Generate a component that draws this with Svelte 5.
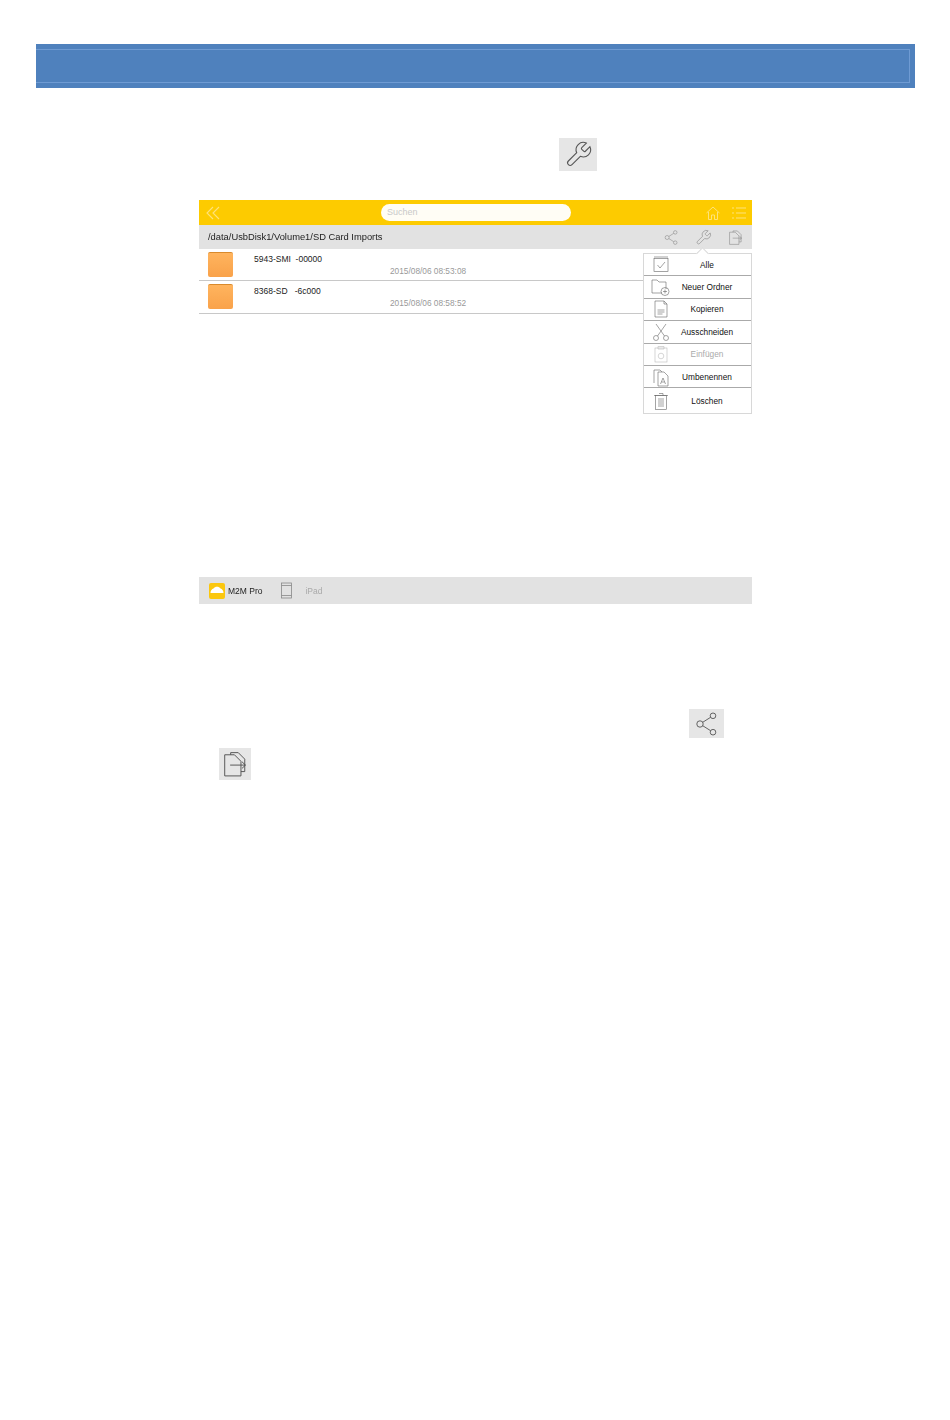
<script>
  const files = [
    { name: '5943-SMI  -00000', date: '2015/08/06 08:53:08' },
    { name: '8368-SD   -6c000', date: '2015/08/06 08:58:52' }
  ];
  const menu = [
    { label: 'Alle', icon: 'check' },
    { label: 'Neuer Ordner', icon: 'folder' },
    { label: 'Kopieren', icon: 'copy' },
    { label: 'Ausschneiden', icon: 'cut' },
    { label: 'Einfügen', icon: 'paste', off: true },
    { label: 'Umbenennen', icon: 'rename' },
    { label: 'Löschen', icon: 'trash' }
  ];
</script>

{#snippet wrench(size)}
  <svg width={size} height={size} viewBox="0 0 24 24" fill="none" stroke="currentColor" stroke-width="0.9">
    <path d="M14.700 6.300a1 1 0 0 0 0 1.400l1.600 1.600a1 1 0 0 0 1.400 0l3.770-3.770a6 6 0 0 1-7.940 7.940l-6.910 6.910a2.120 2.120 0 0 1-3-3l6.910-6.910a6 6 0 0 1 7.940-7.940l-3.760 3.760z" />
  </svg>
{/snippet}

{#snippet share(size)}
  <svg width={size} height={size} viewBox="0 0 24 24" fill="none" stroke="currentColor" stroke-width="0.9">
    <circle cx="5" cy="12" r="3.200" />
    <circle cx="18" cy="3.800" r="2.800" />
    <circle cx="18" cy="20.200" r="2.800" />
    <path d="M7.700 10.300 15.600 5.300M7.700 13.700l7.900 5" />
  </svg>
{/snippet}

{#snippet exportDoc(size)}
  <svg width={size} height={size} viewBox="0 0 24 24" fill="none" stroke="currentColor" stroke-width="0.9">
    <path d="M8 3.500V1.500h7l6 6V19h-3.500" />
    <path d="M2.500 3.500h9l6 6V23h-15z" />
    <path d="M7.500 13h14M18.500 10l3.200 3-3.200 3" />
  </svg>
{/snippet}

{#snippet menuIcon(name)}
  <svg width="20" height="20" viewBox="0 0 20 20" fill="none" stroke="currentColor" stroke-width="0.6">
    {#if name === 'check'}
      <rect x="3" y="3.500" width="14" height="13" />
      <path d="M3 2h14M6.500 10l2.500 3 5-6" />
    {:else if name === 'folder'}
      <path d="M1 5V3h5l2 2h7v7M1 5v11h10" />
      <circle cx="14" cy="14.500" r="4" />
      <path d="M12 14.500h4M14 12.500v4" />
    {:else if name === 'copy'}
      <path d="M4 2h9l3 3v13H4z" />
      <path d="M13 2v3h3M6.500 11h7M6.500 13h7M6.500 15h5" />
    {:else if name === 'cut'}
      <circle cx="5" cy="16" r="2.500" />
      <circle cx="15" cy="16" r="2.500" />
      <path d="M6.500 14 15 2M13.500 14 5 2" />
    {:else if name === 'paste'}
      <rect x="4" y="4" width="12" height="14" />
      <path d="M7 2.500h6V5H7z" />
      <circle cx="10" cy="12" r="2.800" />
    {:else if name === 'rename'}
      <path d="M3 16V3h6l2 2" />
      <path d="M7 5h6l4 4v10H7z" />
      <path d="M9.500 17l2.500-6 2.500 6M10.500 15h3" />
    {:else}
      <rect x="4.500" y="4.500" width="11" height="14" />
      <path d="M3 4.500h14M8 2.500h4v2M8 7v9M10 7v9M12 7v9" />
    {/if}
  </svg>
{/snippet}

<div class="page">
  <div class="banner"><div class="banner-lines"></div></div>

  <div class="tool-line wrench-line">
    <span class="tool wrench-tool">{@render wrench(29)}</span>
  </div>

  <div class="shot">
    <header class="topbar">
      <svg class="back" width="16" height="14" viewBox="0 0 16 14" fill="none" stroke="currentColor" stroke-width="1.100">
        <path d="M8 1 2 7l6 6M14 1 8 7l6 6" />
      </svg>
      <div class="search">Suchen</div>
      <div class="top-icons">
        <svg width="16" height="16" viewBox="0 0 16 16" fill="none" stroke="currentColor" stroke-width="1">
          <path d="M1.500 8 8 2l6.500 6M3.500 7v7.500h3V10h3v4.500h3V7" />
        </svg>
        <svg width="16" height="14" viewBox="0 0 16 14" fill="none" stroke="currentColor" stroke-width="1">
          <path d="M1 2h2M5 2h10M1 7h2M5 7h10M1 12h2M5 12h10" />
        </svg>
      </div>
    </header>

    <div class="pathbar">
      <span class="path">/data/UsbDisk1/Volume1/SD Card Imports</span>
      <div class="path-icons">
        {@render share(15)}
        {@render wrench(17)}
        {@render exportDoc(15)}
      </div>
    </div>

    <div class="content">
      {#each files as file}
        <div class="row">
          <div class="folder"></div>
          <div class="info">
            <p class="name">{file.name}</p>
            <p class="date">{file.date}</p>
          </div>
        </div>
      {/each}

      <div class="menu">
        <span class="arrow"></span>
        {#each menu as item}
          <div class="menu-item" class:off={item.off}>
            <span class="menu-icon">{@render menuIcon(item.icon)}</span>
            <span class="menu-label">{item.label}</span>
          </div>
        {/each}
      </div>
    </div>

    <footer class="bottombar">
      <span class="m2m">
        <svg width="16" height="16" viewBox="0 0 16 16">
          <rect width="16" height="16" rx="2" fill="#fbc70f" />
          <path d="M1.500 10c0-2.500 1.500-4 3-4.500 1.500-2.500 5.500-2.500 7 0 1.500.5 3 2 3 4.500z" fill="#fff" />
        </svg>
        M2M Pro
      </span>
      <span class="ipad">
        <svg width="13" height="17" viewBox="0 0 13 17" fill="none" stroke="#888" stroke-width="0.8">
          <rect x="1.500" y="1" width="10" height="15" />
          <path d="M1.500 3.500h10M1.500 13.500h10" />
        </svg>
        <span>iPad</span>
      </span>
    </footer>
  </div>

  <div class="tool-line share-line">
    <span class="tool share-tool">{@render share(24)}</span>
  </div>
  <div class="tool-line export-line">
    <span class="tool export-tool">{@render exportDoc(26)}</span>
  </div>
</div>

<style>
  :global(body) {
    margin: 0;
    background: #fff;
  }
  .page {
    height: 1420px;
    padding-top: 44px;
    box-sizing: border-box;
    font-family: "Liberation Sans", Arial, sans-serif;
    color: #222;
  }
  p {
    margin: 0;
  }
  .banner {
    margin: 0 35px 0 36px;
    height: 44px;
    padding: 5px 5px 5px 0;
    box-sizing: border-box;
    background: #4f81bd;
  }
  .banner-lines {
    height: 100%;
    box-sizing: border-box;
    border: 1px solid #6f9bd3;
    border-left: 0;
  }
  .tool-line {
    display: flex;
  }
  .tool {
    display: flex;
    align-items: center;
    justify-content: center;
    background: #e6e6e6;
    color: #555;
  }
  .wrench-line {
    margin-top: 50px;
    padding-left: 559px;
  }
  .wrench-tool {
    width: 38px;
    height: 33px;
  }
  .shot {
    width: 553px;
    margin: 29px 0 0 199px;
    filter: blur(0.4px);
  }
  .topbar {
    height: 25px;
    background: #fdcb00;
    display: flex;
    align-items: center;
    position: relative;
    color: #fee27a;
  }
  .back {
    margin-left: 6px;
  }
  .search {
    position: absolute;
    left: 182px;
    top: 4px;
    width: 190px;
    height: 17px;
    box-sizing: border-box;
    padding-left: 6px;
    border-radius: 9px;
    background: #fffdf5;
    color: #c9c9c9;
    font-size: 9px;
    line-height: 17px;
  }
  .top-icons {
    margin-left: auto;
    margin-right: 5px;
    display: flex;
    align-items: center;
    gap: 10px;
  }
  .pathbar {
    height: 24px;
    background: #e2e2e2;
    display: flex;
    align-items: center;
    padding: 0 9px 0 9px;
  }
  .path {
    font-size: 9.350px;
    color: #222;
  }
  .path-icons {
    margin-left: auto;
    display: flex;
    align-items: center;
    gap: 16px;
    color: #888;
  }
  .content {
    position: relative;
    height: 328px;
    background: #fff;
  }
  .row {
    display: flex;
    height: 32.400px;
    box-sizing: border-box;
    border-bottom: 1px solid #c8c8c8;
    padding: 3px 0 0 9px;
  }
  .folder {
    width: 25px;
    height: 25px;
    border-radius: 2px;
    border-top: 1px solid #d98a2c;
    box-sizing: border-box;
    background: linear-gradient(#ffb45e, #f9a24a);
  }
  .info {
    margin-left: 21px;
    flex: 1;
  }
  .name {
    margin-top: 1px;
    font-size: 8.500px;
    line-height: 12px;
    white-space: pre;
    color: #222;
  }
  .date {
    margin: 1px 0 0 136px;
    font-size: 8.300px;
    line-height: 10px;
    color: #999;
  }
  .menu {
    position: absolute;
    top: 4px;
    left: 444px;
    width: 109px;
    height: 161px;
    box-sizing: border-box;
    background: #fff;
    border: 1px solid #d8d8d8;
    display: flex;
    flex-direction: column;
  }
  .arrow {
    position: absolute;
    top: -5px;
    left: 54px;
    width: 8px;
    height: 8px;
    background: #fff;
    border-left: 1px solid #d8d8d8;
    border-top: 1px solid #d8d8d8;
    transform: rotate(45deg);
  }
  .menu-item {
    height: 22.400px;
    box-sizing: border-box;
    flex: none;
    display: flex;
    align-items: center;
    border-bottom: 1px solid #aaa;
    font-size: 8.300px;
    color: #111;
    position: relative;
  }
  .menu-item:last-child {
    flex: 1;
    border-bottom: 0;
  }
  .menu-icon {
    display: flex;
    width: 20px;
    margin-left: 7px;
    color: #666;
  }
  .menu-label {
    flex: 1;
    text-align: center;
    padding-right: 10px;
    margin-left: 2px;
  }
  .off {
    color: #aaa;
  }
  .off .menu-icon {
    color: #bbb;
  }
  .bottombar {
    height: 27px;
    background: #e2e2e2;
    display: flex;
    align-items: center;
    padding-left: 10px;
    font-size: 8.500px;
  }
  .m2m {
    display: flex;
    align-items: center;
    gap: 3px;
    color: #222;
  }
  .ipad {
    display: flex;
    align-items: center;
    gap: 12px;
    margin-left: 18px;
    color: #aaa;
  }
  .share-line {
    margin-top: 105px;
    padding-left: 689px;
  }
  .share-tool {
    width: 35px;
    height: 29px;
  }
  .export-line {
    margin-top: 10px;
    padding-left: 219px;
  }
  .export-tool {
    width: 32px;
    height: 32px;
  }
</style>
